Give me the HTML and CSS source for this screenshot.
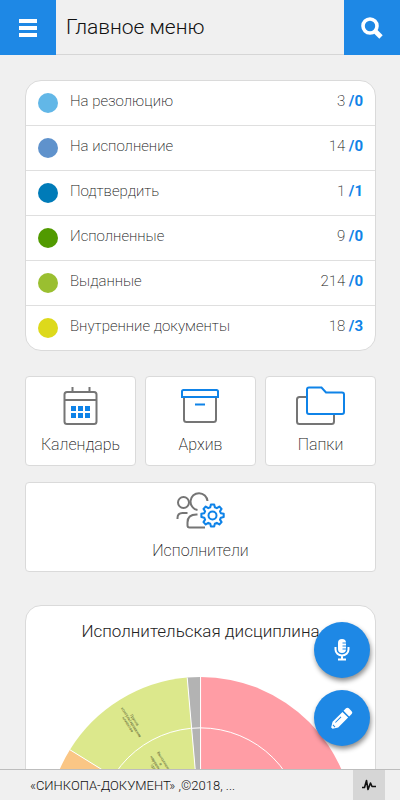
FILE: index.html
```html
<!DOCTYPE html>
<html lang="ru">
<head>
<meta charset="utf-8">
<meta name="viewport" content="width=device-width, initial-scale=1">
<title>Главное меню</title>
<link rel="stylesheet" href="styles.css">
</head>
<body>
<header class="topbar">
  <button class="topbar-button" type="button" aria-label="Меню">
    <svg width="18" height="18" viewBox="0 0 18 18"><path fill="#fff" d="M0 0h18v4H0zM0 7h18v4H0zM0 14h18v4H0z"/></svg>
  </button>
  <h1 class="topbar-title">Главное меню</h1>
  <button class="topbar-button" type="button" aria-label="Поиск">
    <svg width="22" height="22" viewBox="0 0 22 22" fill="none" stroke="#fff"><circle cx="9" cy="9" r="7" stroke-width="3.600"/><path d="M14 14l6 6" stroke-width="4.800"/></svg>
  </button>
</header>

<main class="content">
  <ul class="card counters">
    <li><a class="counter" href="#"><span class="dot sky"></span><span class="name">На резолюцию</span><span class="count">3 <b>/0</b></span></a></li>
    <li><a class="counter" href="#"><span class="dot steel"></span><span class="name">На исполнение</span><span class="count">14 <b>/0</b></span></a></li>
    <li><a class="counter" href="#"><span class="dot blue"></span><span class="name">Подтвердить</span><span class="count">1 <b>/1</b></span></a></li>
    <li><a class="counter" href="#"><span class="dot green"></span><span class="name">Исполненные</span><span class="count">9 <b>/0</b></span></a></li>
    <li><a class="counter" href="#"><span class="dot lime"></span><span class="name">Выданные</span><span class="count">214 <b>/0</b></span></a></li>
    <li><a class="counter" href="#"><span class="dot yellow"></span><span class="name">Внутренние документы</span><span class="count">18 <b>/3</b></span></a></li>
  </ul>

  <nav class="tiles">
    <a class="tile" href="#">
      <svg width="50" height="40" viewBox="0 0 50 40" fill="none" stroke="#757575" stroke-width="2">
        <rect x="8.500" y="6" width="32" height="32" rx="2.500"/><path d="M8.500 14h32M16.500 1v5M33.500 1v5"/>
        <path fill="#0f83e8" stroke="none" d="M15 20h5v5h-5zM22 20h5v5h-5zM29 20h5v5h-5zM15 27h5v5h-5zM22 27h5v5h-5zM29 27h5v5h-5z"/>
      </svg>
      <span>Календарь</span>
    </a>
    <a class="tile" href="#">
      <svg width="50" height="40" viewBox="0 0 50 40" fill="none" stroke="#0f83e8" stroke-width="2">
        <path stroke="#757575" d="M8 11v22.500q0 2.500 2.500 2.500h27q2.500 0 2.500-2.500V11"/>
        <path d="M6 11V5.500Q6 4 7.500 4h33Q42 4 42 5.500V11zM19 18.500h10"/>
      </svg>
      <span>Архив</span>
    </a>
    <a class="tile" href="#">
      <svg width="50" height="40" viewBox="0 0 50 40" fill="none" stroke="#0f83e8" stroke-width="2">
        <path stroke="#757575" d="M10 11H3.500Q1 11 1 13.500v22Q1 38 3.500 38h32q2.500 0 2.500-2.500V29"/>
        <path d="M11 3.500Q11 1.500 13 1.500h12.500l4.500 5h16Q48 6.500 48 8.500V26q0 2-2 2H13q-2 0-2-2z"/>
      </svg>
      <span>Папки</span>
    </a>
    <a class="tile wide" href="#">
      <svg width="50" height="40" viewBox="0 0 50 40" fill="none" stroke="#757575" stroke-width="2">
        <circle cx="7.500" cy="10.500" r="5.500"/>
        <path d="M31.500 9A8.500 8.500 0 1 0 21.500 18M1.500 27v-1q0-5 5-5h5M29 35.500H13.500q-2 0-2-2v-3q0-8 9-8h1"/>
        <g stroke="#0f83e8"><circle cx="36.500" cy="23.500" r="4"/>
        <path stroke-width="2.500" stroke-linejoin="round" d="M35 10.500h4l.8 3.500 2.400 1 3.100-1.900 2.700 2.800-1.900 3 1 2.300 3.500.8v4l-3.500.8-1 2.300 1.900 3-2.700 2.800-3.100-1.900-2.400 1-.8 3.500h-4l-.8-3.500-2.400-1-3.100 1.900-2.700-2.800 1.900-3-1-2.300-3.500-.8v-4l3.500-.8 1-2.300-1.900-3 2.700-2.800 3.100 1.900 2.400-1z" transform="translate(6.200 3.800) scale(.82)"/></g>
      </svg>
      <span>Исполнители</span>
    </a>
  </nav>

  <section class="card chart-card">
    <h2 class="chart-title">Исполнительская дисциплина</h2>
    <svg class="chart" viewBox="-154 -154 308 308" role="img" aria-label="Исполнительская дисциплина">
      <path fill="#ff9da5" d="M0 0V-154A154 154 0 0 1 0 154z"/>
      <path fill="#fac685" d="M0 0V154A154 154 0 0 1-131-81z"/>
      <path fill="#dce88c" d="M0 0L-131-81A154 154 0 0 1-13.400-153.400z"/>
      <path fill="#b3b3b3" d="M0 0L-13.400-153.400A154 154 0 0 1 0-154z"/>
      <path fill="none" stroke="#fff" d="M0 0V-154M0 0L-13.400-153.400M0 0L-131-81M0 0V154"/>
      <circle r="103" fill="none" stroke="#fff"/>
      <g class="chart-label" transform="translate(-69 -109) rotate(58)">
        <text y="-2">Группа</text><text y="2">консультирования</text><text y="6">клиентов</text>
      </g>
      <g class="chart-label" transform="translate(-41 -66) rotate(58)">
        <text y="-4">Выполнение</text><text y="0">в</text><text y="4">нарушенный</text><text y="8">срок</text>
      </g>
    </svg>
  </section>
</main>

<div class="actions">
  <button class="fab" type="button" aria-label="Голосовой ввод">
    <svg width="16" height="24" viewBox="0 0 16 24"><rect x="4" y="1" width="8" height="14" rx="4" fill="#fff"/><path d="M8.500 5H12M8.500 8H12M8.500 11H12" stroke="#1e88e5"/><path d="M1.500 9v2.500a6.500 6 0 0 0 13 0V9M8 17.500V21M4 21.500h8" fill="none" stroke="#fff" stroke-width="2"/></svg>
  </button>
  <button class="fab" type="button" aria-label="Редактировать">
    <svg width="24" height="24" viewBox="0 0 24 24"><g transform="translate(1.500 22.500) rotate(-45)"><path fill="#fff" d="M.5-1L5.500-4H19.500V4H5.500L.5 1zM21-4H24.500q2 0 2 2V2q0 2-2 2H21z"/><path d="M7-1.500H15M3.500-1.500V1.500" stroke="#1e88e5"/></g></svg>
  </button>
</div>

<footer class="footer">
  <p class="copyright">«СИНКОПА-ДОКУМЕНТ» ,©2018, ...</p>
  <button class="status" type="button" aria-label="Активность">
    <svg width="16" height="14" viewBox="0 0 16 14" fill="none" stroke="#111" stroke-width="1.600" stroke-linejoin="round"><path d="M1 9.500H3.500L5.500 2.500 7 11.500 9.500 5 11 8.500H15"/></svg>
  </button>
</footer>
</body>
</html>
```
FILE: styles.css
```css
* { box-sizing: border-box; }

body {
  margin: 0;
  height: 100vh;
  display: flex;
  flex-direction: column;
  position: relative;
  background: #f0f0f0;
  color: #111;
  font-family: Roboto, "Liberation Sans", sans-serif;
  font-weight: 200;
}

button { border: 0; padding: 0; cursor: pointer; }
a { color: inherit; text-decoration: none; }
svg { display: block; flex: none; }

.topbar {
  flex: none;
  display: flex;
  height: 55px;
}
.topbar-button {
  width: 56px;
  display: flex;
  align-items: center;
  justify-content: center;
  background: #1e88e5;
}
.topbar-title {
  flex: 1;
  margin: 0;
  padding-left: 10px;
  border-bottom: 1px solid #d6d6d6;
  font-size: 21px;
  font-weight: 300;
  line-height: 54px;
}

.content {
  flex: 1;
  min-height: 0;
  overflow-y: auto;
  scrollbar-width: none;
  padding: 25px 24px 25px 25px;
}
.card {
  background: #fff;
  border: 1px solid #dadada;
  border-radius: 16px;
}

.counters {
  margin: 0 0 25px;
  padding: 0;
  list-style: none;
}
.counters li + li { border-top: 1px solid #dfdfdf; }
.counter {
  display: flex;
  align-items: center;
  height: 44px;
  padding: 0 12px;
  font-size: 15px;
  line-height: 20px;
}
.name { flex: 1; padding: 0 12px 4px; }
.count { padding-bottom: 4px; }
.count b { color: #0f83e8; font-weight: 700; }
.dot { width: 20px; height: 20px; border-radius: 50%; }
.sky { background: #62b7e7; }
.steel { background: #5f92cc; }
.blue { background: #007bb8; }
.green { background: #519a00; }
.lime { background: #9abf30; }
.yellow { background: #ddd91b; }

.tiles {
  display: grid;
  grid-template-columns: repeat(3, 1fr);
  gap: 16px 9px;
  margin-bottom: 33px;
}
.tile {
  display: flex;
  flex-direction: column;
  align-items: center;
  gap: 9px;
  height: 90px;
  padding-top: 9px;
  background: #fff;
  border: 1px solid #dadada;
  border-radius: 4px;
  font-size: 16px;
  line-height: 20px;
}
.wide { grid-column: 1 / -1; }

.chart-title {
  margin: 0 0 35px;
  padding-top: 14px;
  color: #222;
  text-align: center;
  font-size: 17px;
  font-weight: 300;
  line-height: 22px;
}
.chart { width: 88%; margin: 0 auto 24px; }
.chart-label {
  fill: #55592f;
  font-size: 4px;
  font-weight: 400;
  text-anchor: middle;
}

.actions {
  position: absolute;
  right: 30px;
  bottom: 54px;
  display: flex;
  flex-direction: column;
  gap: 12px;
}
.fab {
  display: flex;
  align-items: center;
  justify-content: center;
  width: 56px;
  height: 56px;
  border-radius: 50%;
  background: #1e88e5;
  box-shadow: 1px 3px 5px rgba(0, 0, 0, 0.45);
}

.footer {
  flex: none;
  display: flex;
  height: 31px;
  padding-right: 15px;
  border-top: 1px solid #bdbdbd;
  background: #f0f0f0;
}
.copyright {
  flex: 1;
  margin: 0;
  padding-left: 30px;
  font-size: 13px;
  font-weight: 300;
  line-height: 31px;
}
.status {
  display: flex;
  align-items: center;
  justify-content: center;
  width: 32px;
  background: #d6d6d6;
}
```
